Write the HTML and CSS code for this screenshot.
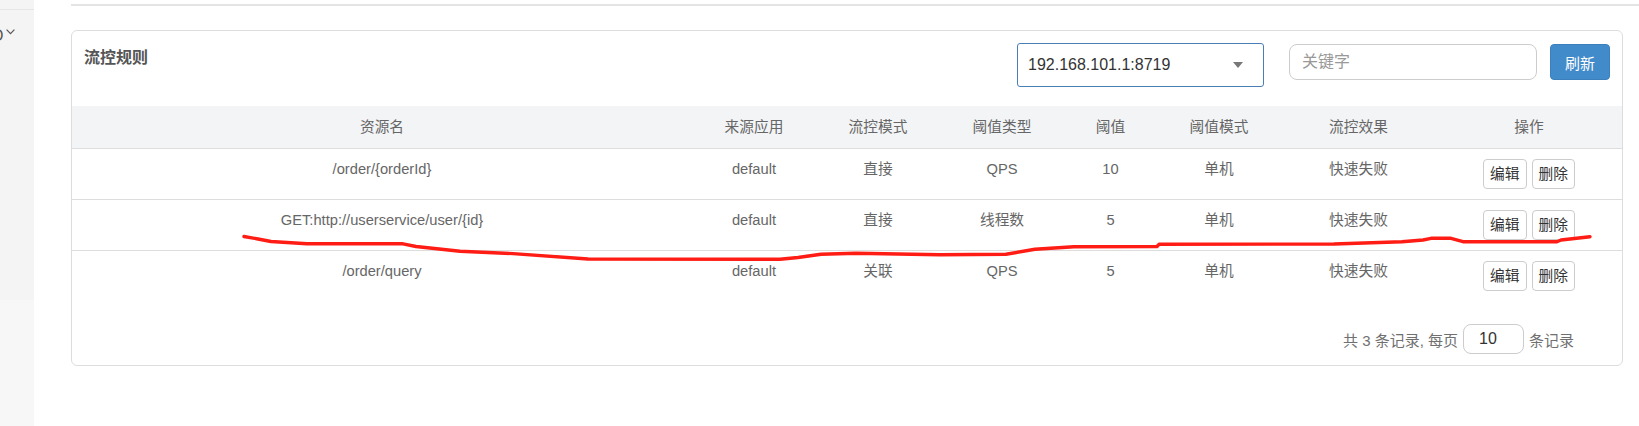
FILE: index.html
```html
<!DOCTYPE html>
<html lang="zh-CN">
<head>
<meta charset="utf-8">
<title>流控规则</title>
<link rel="stylesheet" href="styles.css">
</head>
<body>
<div class="layout">
  <aside class="sidebar">
    <div class="side-top"></div>
    <div class="side-item">
      <span class="side-text">O</span>
      <svg class="side-chev" width="9" height="6" viewBox="0 0 9 6"><polyline points="0.6,0.6 4.5,4.6 8.4,0.6" fill="none" stroke="#555" stroke-width="1.2"/></svg>
    </div>
    <div class="side-fill"></div>
    <div class="side-rest"></div>
  </aside>
  <main class="main">
    <div class="topline"></div>
    <section class="panel">
      <div class="panel-head">
        <h3 class="panel-title">流控规则</h3>
        <div class="tools">
          <div class="select"><span class="select-text">192.168.101.1:8719</span><i class="caret"></i></div>
          <input class="search" type="text" placeholder="关键字">
          <button class="btn-primary" type="button">刷新</button>
        </div>
      </div>
      <table class="rules">
        <colgroup>
          <col class="w40"><col class="w8"><col class="w8"><col class="w8"><col class="w6"><col class="w8"><col class="w10"><col class="w12">
        </colgroup>
        <thead>
          <tr><th>资源名</th><th>来源应用</th><th>流控模式</th><th>阈值类型</th><th>阈值</th><th>阈值模式</th><th>流控效果</th><th>操作</th></tr>
        </thead>
        <tbody>
          <tr><td>/order/{orderId}</td><td>default</td><td>直接</td><td>QPS</td><td>10</td><td>单机</td><td>快速失败</td><td><div class="ops"><button class="btn" type="button">编辑</button><button class="btn" type="button">删除</button></div></td></tr>
          <tr><td>GET:http://userservice/user/{id}</td><td>default</td><td>直接</td><td>线程数</td><td>5</td><td>单机</td><td>快速失败</td><td><div class="ops"><button class="btn" type="button">编辑</button><button class="btn" type="button">删除</button></div></td></tr>
          <tr><td>/order/query</td><td>default</td><td>关联</td><td>QPS</td><td>5</td><td>单机</td><td>快速失败</td><td><div class="ops"><button class="btn" type="button">编辑</button><button class="btn" type="button">删除</button></div></td></tr>
        </tbody>
      </table>
      <div class="pager">
        <span class="pager-text">共 3 条记录, 每页</span>
        <input class="page-size" type="text" value="10">
        <span class="pager-text">条记录</span>
      </div>
    </section>
  </main>
</div>
<svg class="annot" width="1639" height="426" viewBox="0 0 1639 426">
  <path d="M244,236.5 L258,239 L271,241.5 L307,243.8 L403,243.8 L416,246.5 L460,251.2 L513,253.6 L588,259 L780,259.3 L798,257.5 L821,254.2 L856,253.3 L940,254.8 L1006,254.3 L1035,249.3 L1074,246.7 L1157,246.5 L1159,244.3 L1334,244 L1402,241.7 L1423,240 L1431,238.3 L1451,238.3 L1463,241.7 L1557,241.7 L1561,240 L1590,236.7" fill="none" stroke="#ff1c14" stroke-width="3.4" stroke-linejoin="round" stroke-linecap="round"/>
</svg>
</body>
</html>
```
FILE: styles.css
```css
html, body {
  margin: 0;
  padding: 0;
  background: #fff;
}
body {
  font-family: "Liberation Sans", Arial, "Noto Sans CJK SC", sans-serif;
  font-size: 14.7px;
  color: #666;
  position: relative;
  overflow: hidden;
}
.layout {
  display: flex;
  height: 426px;
}
.sidebar {
  width: 34px;
  flex: none;
  display: flex;
  flex-direction: column;
  background: #f4f4f4;
  overflow: hidden;
}
.side-top {
  height: 9px;
  border-bottom: 1px solid #e6e6e6;
  flex: none;
}
.side-item {
  display: flex;
  align-items: flex-start;
  height: 40px;
  margin-top: 18px;
  flex: none;
}
.side-text {
  font-size: 16px;
  line-height: 16px;
  color: #555;
  margin-left: -9px;
}
.side-chev {
  margin-left: 3px;
  margin-top: 1px;
  flex: none;
}
.side-fill {
  height: 232px;
  flex: none;
}
.side-rest {
  flex: 1;
  background: #f7f7f7;
}
.main {
  flex: 1;
  padding-left: 37px;
  min-width: 0;
}
.topline {
  height: 2px;
  background: #e4e4e4;
  margin-top: 4px;
}
.panel {
  margin: 24px 16px 0 0;
  border: 1px solid #ddd;
  border-radius: 6px;
  overflow: hidden;
}
.panel-head {
  height: 75px;
  box-sizing: border-box;
  padding: 12px 12px 0 12px;
  display: flex;
  justify-content: space-between;
  align-items: flex-start;
}
.panel-title {
  margin: 3px 0 0 0;
  font-size: 16px;
  line-height: 24px;
  font-weight: bold;
  color: #555;
}
.tools {
  display: flex;
  align-items: flex-start;
}
.select {
  width: 247px;
  height: 44px;
  box-sizing: border-box;
  border: 1px solid #4a7fb6;
  border-radius: 3px;
  padding-left: 10px;
  display: flex;
  align-items: center;
  font-size: 16px;
  color: #333;
  margin-right: 25px;
}
.caret {
  margin-left: auto;
  margin-right: 20px;
  width: 0;
  height: 0;
  border-left: 5.5px solid transparent;
  border-right: 5.5px solid transparent;
  border-top: 6px solid #777;
}
.search {
  width: 248px;
  height: 36px;
  box-sizing: border-box;
  margin: 1px 13px 0 0;
  border: 1px solid #ccc;
  border-radius: 8px;
  padding: 0 12px;
  font-family: inherit;
  font-size: 16px;
  color: #555;
  outline: none;
}
.search::placeholder {
  color: #999;
}
.btn-primary {
  width: 60px;
  height: 36px;
  margin-top: 1px;
  box-sizing: border-box;
  background: #428bca;
  border: 1px solid #3b80bd;
  border-radius: 4px;
  color: #fff;
  font-family: inherit;
  font-size: 15px;
  padding: 0;
}
.rules {
  width: 100%;
  border-collapse: collapse;
  table-layout: fixed;
}
.w40 { width: 40%; }
.w12 { width: 12%; }
.w10 { width: 10%; }
.w8 { width: 8%; }
.w6 { width: 6%; }
.rules th {
  background: #f3f4f6;
  font-weight: normal;
  color: #666;
  padding: 11px 8px 10px;
  line-height: 21px;
  text-align: center;
  border-bottom: 1px solid #ddd;
}
.rules td {
  padding: 10px 8px 10px;
  line-height: 21px;
  text-align: center;
  vertical-align: top;
  border-bottom: 1px solid #ddd;
  color: #666;
}
.rules tbody tr:last-child td {
  border-bottom: none;
}
.ops {
  display: flex;
  justify-content: center;
  gap: 5px;
}
.btn {
  height: 30px;
  box-sizing: border-box;
  padding: 0 6px;
  background: #fff;
  border: 1px solid #ccc;
  border-radius: 4px;
  font-family: inherit;
  font-size: 14.7px;
  color: #333;
  line-height: 28px;
}
.pager {
  display: flex;
  justify-content: flex-end;
  align-items: center;
  gap: 5px;
  padding: 23px 48px 11px 0;
}
.pager-text {
  font-size: 15px;
  color: #707070;
}
.page-size {
  width: 61px;
  height: 30px;
  box-sizing: border-box;
  border: 1px solid #ccc;
  border-radius: 8px;
  padding: 0 0 0 15px;
  font-family: inherit;
  font-size: 16px;
  color: #333;
  outline: none;
}
.annot {
  position: absolute;
  left: 0;
  top: 0;
  pointer-events: none;
}
```
